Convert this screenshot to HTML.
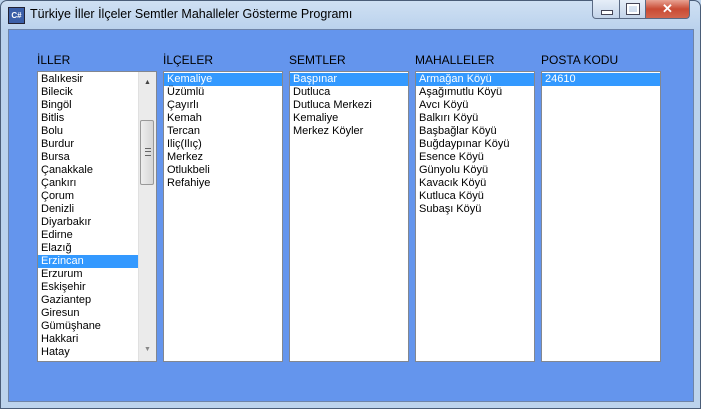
<!DOCTYPE html><html><head><style>
body{margin:0;width:701px;height:409px;overflow:hidden;background:#bcd3ec;font-family:"Liberation Sans",sans-serif;position:relative}
.frame{position:absolute;left:0;top:0;width:699px;height:407px;border:1px solid #4a5d78;border-radius:7px 7px 0 0;background:linear-gradient(#cfe0f3,#b9d1ec 30px,#bcd3ec)}
.title{position:absolute;left:30px;top:7px;font-size:12.5px;color:#000}
.icon{position:absolute;left:8px;top:7px;width:15px;height:15px;background:#3b5fa8;border:1px solid #223;color:#fff;font-size:8px;font-weight:bold;line-height:15px;text-align:center}
.client{position:absolute;left:8px;top:29px;width:684px;height:371px;background:#6495ed;border:1px solid #6e84a8}
.lbl{position:absolute;top:53px;font-size:12px;color:#000}
.lb{position:absolute;top:71px;width:120px;background:#fff;border:1px solid #828790;font-size:11px;line-height:13px;overflow:hidden;padding-top:1px;box-sizing:border-box;height:291px}
.it{padding-left:3px;height:13px;white-space:nowrap}
.sel{background:#3399ff;color:#fff}
.sb{position:absolute;right:0;top:0;width:17px;height:289px;background:#ebebeb;border-left:1px solid #e0e0e0}
.thumb{position:absolute;left:1px;top:48px;width:14px;height:65px;background:linear-gradient(90deg,#eee,#d6d6d6);border:1px solid #999;border-radius:2px;box-sizing:border-box}
.btn{position:absolute;top:0;height:18px;border:1px solid #5a6a84;border-top:none}
</style></head><body>
<div class="frame"></div>
<div class="icon">C#</div>
<div class="title">Türkiye İller İlçeler Semtler Mahalleler Gösterme Programı</div>
<div class="btn" style="left:592px;width:26px;border-radius:0 0 0 4px;background:linear-gradient(#e6eef8,#c3d4e9)"><div style="position:absolute;left:8px;top:10px;width:10px;height:3px;background:#fff;border:1px solid #445"></div></div>
<div class="btn" style="left:619px;width:25px;background:linear-gradient(#e6eef8,#c3d4e9)"><div style="position:absolute;left:7px;top:4px;width:8px;height:6px;border:2px solid #fff;outline:1px solid #445"></div></div>
<div class="btn" style="left:645px;width:43px;border-radius:0 0 4px 0;background:linear-gradient(#e8a393,#c94b34 50%,#d2654d);color:#fff;font-weight:bold;font-size:13px;text-align:center;line-height:17px">✕</div>
<div class="client"></div>
<div class="lbl" style="left:37px">İLLER</div>
<div class="lbl" style="left:163px">İLÇELER</div>
<div class="lbl" style="left:289px">SEMTLER</div>
<div class="lbl" style="left:415px">MAHALLELER</div>
<div class="lbl" style="left:541px">POSTA KODU</div>
<div class="lb" style="left:37px"><div class="it">Balıkesir</div><div class="it">Bilecik</div><div class="it">Bingöl</div><div class="it">Bitlis</div><div class="it">Bolu</div><div class="it">Burdur</div><div class="it">Bursa</div><div class="it">Çanakkale</div><div class="it">Çankırı</div><div class="it">Çorum</div><div class="it">Denizli</div><div class="it">Diyarbakır</div><div class="it">Edirne</div><div class="it">Elazığ</div><div class="it sel" style="margin-right:18px">Erzincan</div><div class="it">Erzurum</div><div class="it">Eskişehir</div><div class="it">Gaziantep</div><div class="it">Giresun</div><div class="it">Gümüşhane</div><div class="it">Hakkari</div><div class="it">Hatay</div>
<div class="sb"><div style="position:absolute;top:4px;left:5px;font-size:7px;color:#444">▲</div><div class="thumb"><div style="position:absolute;left:4px;top:27px;width:6px;height:6px;border-top:1px solid #666;border-bottom:1px solid #666"></div><div style="position:absolute;left:4px;top:30px;width:6px;border-top:1px solid #666"></div></div><div style="position:absolute;bottom:5px;left:5px;font-size:7px;color:#888">▼</div></div></div>
<div class="lb" style="left:163px"><div class="it sel">Kemaliye</div><div class="it">Üzümlü</div><div class="it">Çayırlı</div><div class="it">Kemah</div><div class="it">Tercan</div><div class="it">Iliç(Ilıç)</div><div class="it">Merkez</div><div class="it">Otlukbeli</div><div class="it">Refahiye</div></div>
<div class="lb" style="left:289px"><div class="it sel">Başpınar</div><div class="it">Dutluca</div><div class="it">Dutluca Merkezi</div><div class="it">Kemaliye</div><div class="it">Merkez Köyler</div></div>
<div class="lb" style="left:415px"><div class="it sel">Armağan Köyü</div><div class="it">Aşağımutlu Köyü</div><div class="it">Avcı Köyü</div><div class="it">Balkırı Köyü</div><div class="it">Başbağlar Köyü</div><div class="it">Buğdaypınar Köyü</div><div class="it">Esence Köyü</div><div class="it">Günyolu Köyü</div><div class="it">Kavacık Köyü</div><div class="it">Kutluca Köyü</div><div class="it">Subaşı Köyü</div></div>
<div class="lb" style="left:541px"><div class="it sel">24610</div></div>
</body></html>
